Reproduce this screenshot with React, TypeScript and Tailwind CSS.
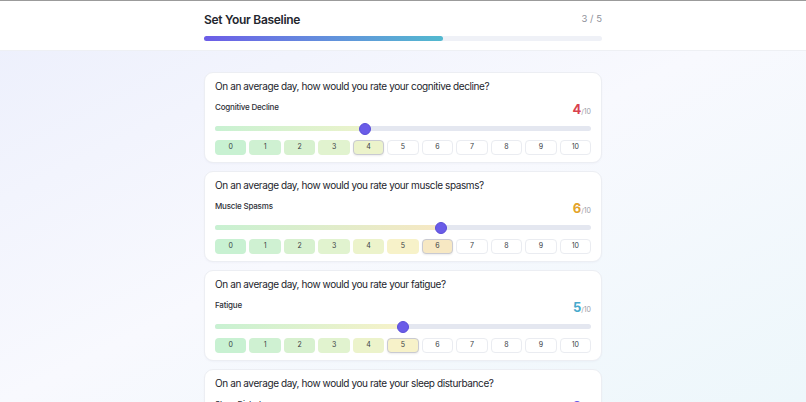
import React from 'react';

type Question = {
  question: string;
  label: string;
  value: number;
  valueClass: string;
};

const questions: Question[] = [
  { question: 'On an average day, how would you rate your cognitive decline?', label: 'Cognitive Decline', value: 4, valueClass: 'text-[#d9414e]' },
  { question: 'On an average day, how would you rate your muscle spasms?', label: 'Muscle Spasms', value: 6, valueClass: 'text-[#e3a32a]' },
  { question: 'On an average day, how would you rate your fatigue?', label: 'Fatigue', value: 5, valueClass: 'text-[#46a9cc]' },
  { question: 'On an average day, how would you rate your sleep disturbance?', label: 'Sleep Disturbance', value: 3, valueClass: 'text-[#6b5ce7]' },
];

// fill colours for the score buttons, green -> yellow -> amber
const scoreBg = [
  'bg-[#c8f1d2]',
  'bg-[#cff1d2]',
  'bg-[#d7f1cf]',
  'bg-[#e1f3cf]',
  'bg-[#ecf3cb]',
  'bg-[#f7f2c9]',
  'bg-[#f7e8c3]',
  'bg-[#f7dfc0]',
  'bg-[#f7d6c0]',
  'bg-[#f7cdc2]',
  'bg-[#f6c4c4]',
];

const trackFill = [
  '#c8f1d2', '#cff1d2', '#d7f1cf', '#e1f3cf', '#ecf3cb', '#f7f2c9', '#f7e8c3', '#f7dfc0', '#f7d6c0', '#f7cdc2', '#f6c4c4',
];

const QuestionCard: React.FC<{ q: Question }> = ({ q }) => {
  const pct = (q.value / 10) * 100;
  return (
    <div className="bg-white rounded-[9px] border border-[#eceef3] px-[10px] pt-[6px] pb-[7px] shadow-[0_1px_2px_rgba(30,40,90,0.03)]">
      <p className="text-[10px] leading-[14px] text-[#23252d] tracking-[-0.4px]">{q.question}</p>
      <div className="flex items-center justify-between mt-[6px] h-[16px]">
        <span className="text-[8px] font-medium text-[#2e3038] tracking-[-0.2px]">{q.label}</span>
        <span className="leading-none mt-[1px]">
          <span className={`text-[13px] font-bold ${q.valueClass}`}>{q.value}</span>
          <span className="text-[7px] text-[#9a9ca6]">/10</span>
        </span>
      </div>
      <div className="relative mt-[11px] h-[5px] rounded-full bg-[#e4e7f0]">
        <div
          className="absolute left-0 top-0 h-full rounded-full"
          style={{ width: `${pct}%`, background: `linear-gradient(to right, #c8f1d2, ${trackFill[q.value]})` }}
        />
        <div
          className="absolute top-1/2 w-[12px] h-[12px] -translate-x-1/2 -translate-y-1/2 rounded-full bg-[#6a5ce8] border border-[#5a4ed8]"
          style={{ left: `${pct}%` }}
        />
      </div>
      <div className="grid grid-cols-11 gap-[3px] mt-[9px]">
        {Array.from({ length: 11 }, (_, i) => {
          const filled = i <= q.value;
          const selected = i === q.value;
          return (
            <div
              key={i}
              className={`h-[15px] rounded-[4px] flex items-center justify-center text-[7px] text-[#3a3c44] ${
                filled ? scoreBg[i] : 'bg-white'
              } ${selected ? 'border border-[#c9cad2] shadow-[0_1px_2px_rgba(0,0,0,0.08)]' : filled ? 'border border-transparent' : 'border border-[#eaecf1]'}`}
            >
              {i}
            </div>
          );
        })}
      </div>
    </div>
  );
};

export default function App() {
  return (
    <div
      className="w-[806px] h-[402px] overflow-hidden border-t border-[#9b9b9b] bg-gradient-to-br from-[#eceffc] via-[#f8f9fe] to-[#edf7fb]"
      style={{ fontFamily: 'Inter, "Noto Sans", sans-serif' }}
    >
      <header className="bg-white border-b border-[#eef0f4] h-[50px]">
        <div className="w-[398px] mx-auto pt-[10px]">
          <div className="flex items-center justify-between h-[17px]">
            <h1 className="text-[12px] font-semibold text-[#24262e] tracking-[-0.3px]">Set Your Baseline</h1>
            <span className="text-[9.5px] text-[#8e909a]">3 / 5</span>
          </div>
          <div className="mt-[8px] h-[5px] rounded-full bg-[#eff1f7]">
            <div className="h-full w-[60%] rounded-full bg-gradient-to-r from-[#6c5ce7] to-[#52b9cf]" />
          </div>
        </div>
      </header>
      <main className="w-[398px] mx-auto pt-[21px] flex flex-col gap-[8px]">
        {questions.map((q) => (
          <QuestionCard key={q.label} q={q} />
        ))}
      </main>
    </div>
  );
}
